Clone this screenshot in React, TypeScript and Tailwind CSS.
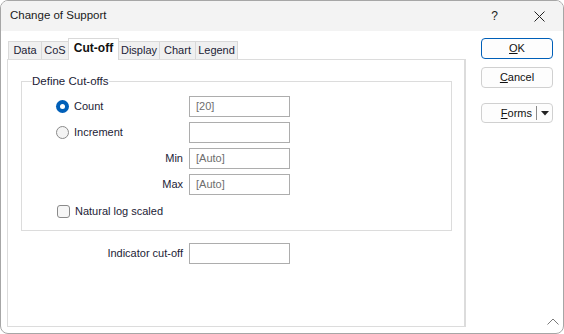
import React from 'react';

const tabs = [
  { name: 'Data', w: 'w-[34px]' },
  { name: 'CoS', w: 'w-[28px]' },
  { name: 'Cut-off', w: 'w-[51px]', active: true },
  { name: 'Display', w: 'w-[42px]' },
  { name: 'Chart', w: 'w-[37px]' },
  { name: 'Legend', w: 'w-[43px]' },
];

function Field({ value }: { value?: string }) {
  return (
    <div className="w-[101px] h-[21px] border border-[#adadad] bg-white flex items-center pl-[6px] text-[#6e6e6e]">
      {value}
    </div>
  );
}

function Radio({ checked }: { checked?: boolean }) {
  if (checked) {
    return (
      <span className="w-[13px] h-[13px] rounded-full bg-[#005fb8] flex items-center justify-center shrink-0">
        <span className="w-[5px] h-[5px] rounded-full bg-white" />
      </span>
    );
  }
  return <span className="w-[13px] h-[13px] rounded-full border border-[#8a8a8a] bg-[#f4f4f4] shrink-0" />;
}

export default function App() {
  return (
    <div className="w-[564px] h-[334px] bg-white border border-[#a6a6a6] rounded-lg overflow-hidden flex flex-col relative font-['Liberation_Sans',Arial,sans-serif] text-[11px] text-[#1c1c36]">
      {/* title bar */}
      <div className="h-[30px] bg-[#f3f3f3] flex items-center pl-[9px] shrink-0">
        <span className="text-[11.5px] text-[#1a1a1a]">Change of Support</span>
        <span className="ml-auto mr-[36px] text-[12px] text-[#1a1a1a]">?</span>
        <svg width="11" height="11" viewBox="0 0 11 11" className="mr-[18px]">
          <path d="M0.5 0.5 L10.5 10.5 M10.5 0.5 L0.5 10.5" stroke="#222" strokeWidth="1" fill="none" />
        </svg>
      </div>

      <div className="flex flex-1">
        {/* left: tabs + page */}
        <div className="pl-[6px] pt-[7px]">
          <div className="flex items-end h-[21px] pl-[1px]">
            {tabs.map((t, i) => (
              <div
                key={t.name}
                className={
                  t.active
                    ? `${t.w} h-[22px] -mb-px relative z-10 bg-white border border-b-0 border-[#d9d9d9] font-bold text-[12px] text-[#111] flex items-center justify-center pb-[3px] ${i > 0 ? '-ml-px' : ''}`
                    : `${t.w} h-[18px] bg-[#f0f0f0] border border-b-0 border-[#d9d9d9] flex items-center justify-center ${i > 0 ? '-ml-px' : ''}`
                }
              >
                {t.name}
              </div>
            ))}
          </div>

          <div className="w-[459px] h-[268px] border border-r-2 border-[#dcdcdc] pl-[13px]">
            <fieldset className="w-[431px] h-[156px] mt-[15px] border border-[#dcdcdc] px-[10px]">
              <legend className="px-0 leading-[13px] text-[11.5px]">Define Cut-offs</legend>
              <div className="flex flex-col gap-[5px] pt-[8px]">
                <div className="flex items-center h-[21px]">
                  <div className="w-[157px] flex items-center pl-[24px] gap-[5px]">
                    <Radio checked />
                    <span>Count</span>
                  </div>
                  <Field value="[20]" />
                </div>
                <div className="flex items-center h-[21px]">
                  <div className="w-[157px] flex items-center pl-[24px] gap-[5px]">
                    <Radio />
                    <span>Increment</span>
                  </div>
                  <Field />
                </div>
                <div className="flex items-center h-[21px]">
                  <div className="w-[157px] text-right pr-[6px]">Min</div>
                  <Field value="[Auto]" />
                </div>
                <div className="flex items-center h-[21px]">
                  <div className="w-[157px] text-right pr-[6px]">Max</div>
                  <Field value="[Auto]" />
                </div>
                <div className="flex items-center h-[16px] mt-[3px] pl-[25px] gap-[5px]">
                  <span className="w-[13px] h-[13px] rounded-[3px] border border-[#8a8a8a] bg-[#f6f6f6]" />
                  <span>Natural log scaled</span>
                </div>
              </div>
            </fieldset>

            <div className="flex items-center mt-[12px]">
              <div className="w-[168px] text-right pr-[6px]">Indicator cut-off</div>
              <Field />
            </div>
          </div>
        </div>

        {/* right: buttons */}
        <div className="pl-[15px] pt-[7px] flex flex-col">
          <button className="w-[72px] h-[21px] rounded-[4px] border border-[#005fb8] bg-[#fdfdfd] text-[#111] flex items-center justify-center">
            <span><span className="underline">O</span>K</span>
          </button>
          <button className="w-[72px] h-[21px] mt-[8px] rounded-[4px] border border-[#d0d0d0] bg-[#fdfdfd] text-[#111] flex items-center justify-center">
            <span><span className="underline">C</span>ancel</span>
          </button>
          <div className="w-[72px] h-[20px] mt-[15px] rounded-[4px] border border-[#d0d0d0] bg-[#fdfdfd] text-[#111] flex items-center">
            <span className="w-[54px] text-right pr-[4px]"><span className="underline">F</span>orms</span>
            <span className="w-px h-[14px] bg-[#8a8a8a]" />
            <svg width="8" height="5" viewBox="0 0 8 5" className="ml-[4px]">
              <path d="M0 0 H8 L4 4.5 Z" fill="#222" />
            </svg>
          </div>
        </div>
      </div>

      {/* size grip chevron */}
      <svg width="12" height="7" viewBox="0 0 12 7" className="absolute right-[4px] bottom-[8px]">
        <path d="M0.5 6.5 L6 1 L11.5 6.5" stroke="#7a7a7a" strokeWidth="1" fill="none" />
      </svg>
    </div>
  );
}
